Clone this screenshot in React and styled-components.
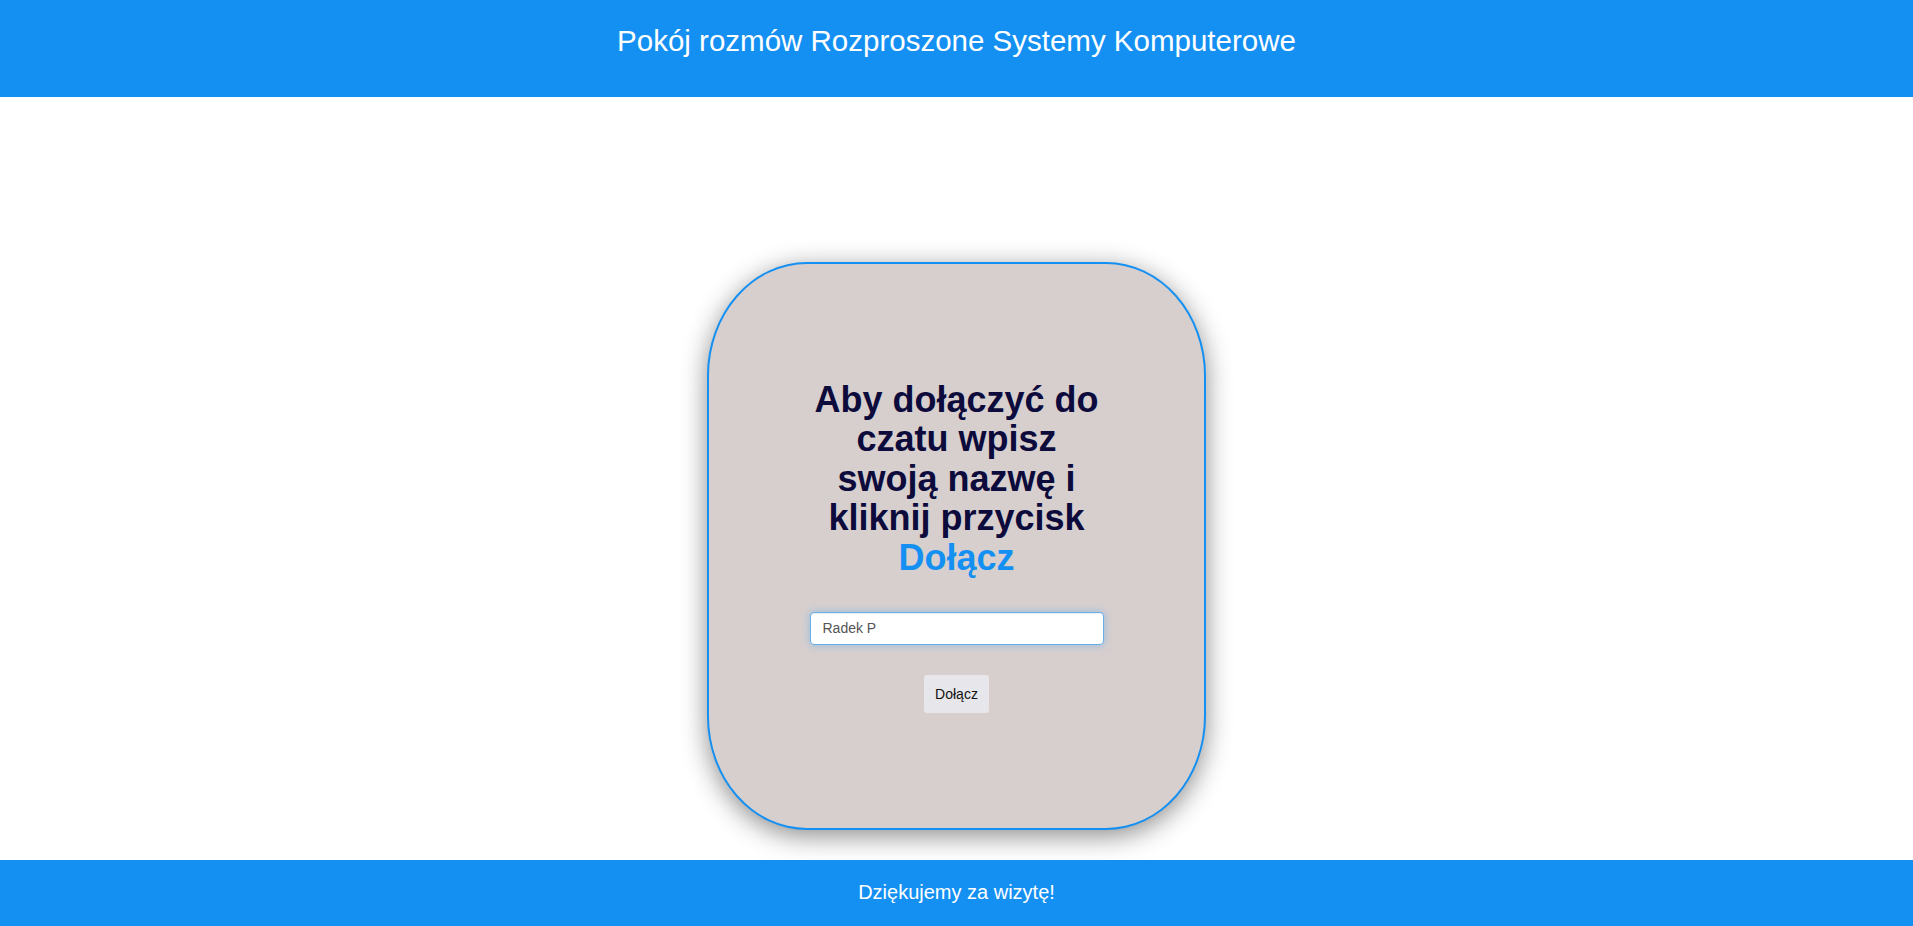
import React, { useState } from "react";
import styled, { createGlobalStyle } from "styled-components";

const GlobalStyle = createGlobalStyle`
  * {
    box-sizing: border-box;
  }
  body {
    margin: 0;
    font-family: "Liberation Sans", Arial, sans-serif;
    background: #fff;
  }
`;

const Page = styled.div`
  display: flex;
  flex-direction: column;
  min-height: 100vh;
`;

const Header = styled.header`
  height: 97px;
  padding-top: 23px;
  background-color: #1490f2;
  color: #fff;
  text-align: center;
`;

const Title = styled.h1`
  margin: 0;
  font-size: 29.5px;
  font-weight: 400;
  line-height: 36px;
`;

const Main = styled.main`
  flex: 1;
  display: flex;
  justify-content: center;
  padding-top: 165px;
`;

const Card = styled.div`
  width: 499px;
  height: 568px;
  display: flex;
  flex-direction: column;
  align-items: center;
  padding-top: 116px;
  background-color: #d7cfce;
  border: 2px solid #1490f2;
  border-radius: 20%;
  box-shadow: 0 6px 26px rgba(0, 0, 0, 0.45);
`;

const Heading = styled.h2`
  width: 300px;
  margin: 0 0 35px;
  font-size: 36px;
  line-height: 39.4px;
  font-weight: 700;
  text-align: center;
  color: #0c0b3c;
`;

const Highlight = styled.span`
  color: #1490f2;
`;

const NameInput = styled.input`
  width: 294px;
  height: 33px;
  padding: 0 12px 2px;
  font-family: "Liberation Sans", Arial, sans-serif;
  font-size: 14px;
  color: #555;
  background: #fff;
  border: 1px solid #66afe9;
  border-radius: 4px;
  box-shadow: inset 0 1px 1px rgba(0, 0, 0, 0.075),
    0 0 8px rgba(102, 175, 233, 0.6);
  outline: none;
`;

const JoinButton = styled.button`
  margin-top: 30px;
  height: 38px;
  padding: 0 11px;
  font-family: "Liberation Sans", Arial, sans-serif;
  font-size: 14px;
  color: #111;
  background-color: #e7e6ea;
  border: none;
  border-radius: 3px;
  cursor: pointer;
`;

const Footer = styled.footer`
  height: 66px;
  display: flex;
  align-items: center;
  justify-content: center;
  padding-bottom: 2px;
  background-color: #1490f2;
  color: #fff;
  font-size: 20px;
`;

const App = () => {
  const [name, setName] = useState("Radek P");

  return (
    <Page>
      <GlobalStyle />
      <Header>
        <Title>Pokój rozmów Rozproszone Systemy Komputerowe</Title>
      </Header>

      <Main>
        <Card>
          <Heading>
            Aby dołączyć do czatu wpisz swoją nazwę i kliknij przycisk{" "}
            <Highlight>Dołącz</Highlight>
          </Heading>
          <NameInput value={name} onChange={(e) => setName(e.target.value)} />
          <JoinButton>Dołącz</JoinButton>
        </Card>
      </Main>

      <Footer>Dziękujemy za wizytę!</Footer>
    </Page>
  );
};

export default App;
